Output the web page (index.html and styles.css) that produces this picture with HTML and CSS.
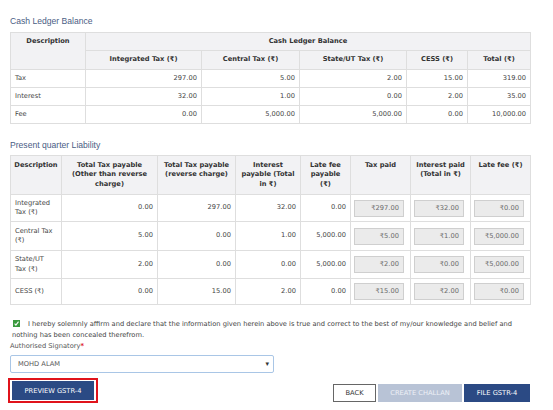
FILE: index.html
```html
<!DOCTYPE html>
<html>
<head>
<meta charset="utf-8">
<link rel="stylesheet" href="styles.css">
</head>
<body>
<div class="page">
  <div class="title t-first">Cash Ledger Balance</div>
  <table class="grid t1">
    <colgroup><col class="c1"><col class="c2"><col class="c3"><col class="c4"><col class="c5"><col class="c6"></colgroup>
    <thead>
      <tr class="hr1"><th rowspan="2" class="top">Description</th><th colspan="5">Cash Ledger Balance</th></tr>
      <tr class="hr2"><th>Integrated Tax (₹)</th><th>Central Tax (₹)</th><th>State/UT Tax (₹)</th><th>CESS (₹)</th><th>Total (₹)</th></tr>
    </thead>
    <tbody>
      <tr><td class="lbl">Tax</td><td>297.00</td><td>5.00</td><td>2.00</td><td>15.00</td><td>319.00</td></tr>
      <tr><td class="lbl">Interest</td><td>32.00</td><td>1.00</td><td>0.00</td><td>2.00</td><td>35.00</td></tr>
      <tr><td class="lbl">Fee</td><td>0.00</td><td>5,000.00</td><td>5,000.00</td><td>0.00</td><td>10,000.00</td></tr>
    </tbody>
  </table>

  <div class="title t-second">Present quarter Liability</div>
  <table class="grid t2">
    <colgroup><col class="d1"><col class="d2"><col class="d3"><col class="d4"><col class="d5"><col class="d6"><col class="d7"><col class="d8"></colgroup>
    <thead>
      <tr class="hr3">
        <th>Description</th>
        <th>Total Tax payable (Other than reverse charge)</th>
        <th>Total Tax payable (reverse charge)</th>
        <th>Interest payable (Total in ₹)</th>
        <th class="narrow">Late fee payable (₹)</th>
        <th>Tax paid</th>
        <th>Interest paid (Total in ₹)</th>
        <th>Late fee (₹)</th>
      </tr>
    </thead>
    <tbody>
      <tr class="r1"><td class="lbl">Integrated Tax (₹)</td><td>0.00</td><td>297.00</td><td>32.00</td><td>0.00</td><td class="pd"><div class="box">₹297.00</div></td><td class="pd"><div class="box">₹32.00</div></td><td class="pd"><div class="box">₹0.00</div></td></tr>
      <tr class="r2"><td class="lbl">Central Tax (₹)</td><td>5.00</td><td>0.00</td><td>1.00</td><td>5,000.00</td><td class="pd"><div class="box">₹5.00</div></td><td class="pd"><div class="box">₹1.00</div></td><td class="pd"><div class="box">₹5,000.00</div></td></tr>
      <tr class="r3"><td class="lbl">State/UT Tax (₹)</td><td>2.00</td><td>0.00</td><td>0.00</td><td>5,000.00</td><td class="pd"><div class="box">₹2.00</div></td><td class="pd"><div class="box">₹0.00</div></td><td class="pd"><div class="box">₹5,000.00</div></td></tr>
      <tr class="r4"><td class="lbl">CESS (₹)</td><td>0.00</td><td>15.00</td><td>2.00</td><td>0.00</td><td class="pd"><div class="box">₹15.00</div></td><td class="pd"><div class="box">₹2.00</div></td><td class="pd"><div class="box">₹0.00</div></td></tr>
    </tbody>
  </table>

  <div class="declare">
    <span class="chk"><svg width="7" height="7" viewBox="0 0 7 7"><rect width="7" height="7" fill="#3a9a3e"/><path d="M1.6 3.7 L2.9 5.1 L5.5 1.7" stroke="#fff" stroke-width="1.1" fill="none"/></svg></span>I hereby solemnly affirm and declare that the information given herein above is true and correct to the best of my/our knowledge and belief and nothing has been concealed therefrom.
  </div>

  <div class="sig-label">Authorised Signatory<span class="req">*</span></div>
  <div class="select"><span>MOHD ALAM</span><span class="arrow">▾</span></div>

  <div class="actions">
    <div class="highlight"><button class="btn primary preview">PREVIEW GSTR-4</button></div>
    <div class="right">
      <button class="btn back">BACK</button>
      <button class="btn disabled">CREATE CHALLAN</button>
      <button class="btn primary">FILE GSTR-4</button>
    </div>
  </div>
</div>
</body>
</html>
```

FILE: styles.css
```css
html, body {
  margin: 0;
  padding: 0;
  background: #fff;
}
body {
  font-family: "DejaVu Sans", Verdana, sans-serif;
  font-size: 6.7px;
  color: #3a3a3a;
}
.page {
  width: 520px;
  padding: 16px 0 0 10px;
}
.title {
  font-family: "Liberation Sans", Arial, sans-serif;
  font-size: 8.6px;
  line-height: 10px;
  color: #4a5d84;
}
.t-first { margin-bottom: 6px; }
.t-second { margin-top: 16px; margin-bottom: 5px; }

.grid {
  width: 520px;
  border-collapse: collapse;
  table-layout: fixed;
}
.grid th, .grid td {
  border: 1px solid #dedede;
  padding: 0 4px;
  line-height: 9.3px;
}
.grid th {
  background: #f2f2f4;
  font-weight: bold;
  color: #333;
  text-align: center;
}
.grid td {
  text-align: right;
  color: #444;
}
.grid td.lbl {
  text-align: left;
}
.t1 .c1 { width: 75px; }
.t1 .c2 { width: 116px; }
.t1 .c3 { width: 98px; }
.t1 .c4 { width: 107px; }
.t1 .c5 { width: 61px; }
.t1 .c6 { width: 63px; }
.t1 .hr1 { height: 18px; }
.t1 .hr2 { height: 19px; }
.t1 tbody tr { height: 18px; }
.t1 th.top { vertical-align: top; padding-top: 4px; }

.t2 .d1 { width: 51px; }
.t2 .d2 { width: 96px; }
.t2 .d3 { width: 78px; }
.t2 .d4 { width: 65px; }
.t2 .d5 { width: 50px; }
.t2 .d6 { width: 60px; }
.t2 .d7 { width: 60px; }
.t2 .d8 { width: 60px; }
.t2 .hr3 { height: 39px; }
.t2 .hr3 th { vertical-align: top; padding: 5px 3px 0; }
.t2 .hr3 th.narrow { padding: 5px 7px 0; }
.t2 .r1 { height: 27px; }
.t2 .r2 { height: 29px; }
.t2 .r3 { height: 28px; }
.t2 .r4 { height: 26px; }
.t2 td.pd { padding: 0 6px 0 3px; }
.box {
  height: 15px;
  line-height: 15px;
  background: #ebebeb;
  border: 1px solid #cfcfcf;
  padding-right: 4px;
  color: #6a6a6a;
  text-align: right;
}

.declare {
  margin-top: 14px;
  padding-left: 2px;
  line-height: 11px;
  color: #444;
}
.chk {
  display: inline-block;
  width: 7px;
  height: 7px;
  margin: 0 8px 0 1px;
  vertical-align: -1px;
}
.chk svg { display: block; }

.sig-label {
  line-height: 11px;
  color: #555;
}
.req { color: #e0101c; font-weight: bold; }

.select {
  margin-top: 3px;
  width: 251px;
  height: 16px;
  border: 1px solid #a9c6e6;
  border-radius: 2px;
  display: flex;
  align-items: center;
  justify-content: space-between;
  padding: 0 4px 0 7px;
  color: #555;
}
.arrow { color: #333; font-size: 7px; }

.actions {
  display: flex;
  justify-content: space-between;
  align-items: flex-start;
  margin-top: 5px;
  margin-left: -2px;
}
.highlight {
  border: 2px solid #e0131b;
  padding: 1px 2px;
}
.btn {
  font-family: "DejaVu Sans", Verdana, sans-serif;
  font-size: 6.7px;
  height: 19px;
  border: none;
  padding: 0;
  margin: 0;
  cursor: pointer;
  display: inline-flex;
  align-items: center;
  justify-content: center;
}
.primary {
  background: #2b4a84;
  color: #fff;
}
.preview { width: 82px; }
.right {
  display: flex;
  gap: 2px;
  margin-top: 6px;
}
.back {
  width: 43px;
  height: 18px;
  background: #fff;
  border: 1px solid #666;
  color: #333;
}
.disabled {
  width: 84px;
  height: 18px;
  background: #b8c3d6;
  color: #eef1f6;
}
.right .primary {
  width: 66px;
  height: 18px;
}
```
